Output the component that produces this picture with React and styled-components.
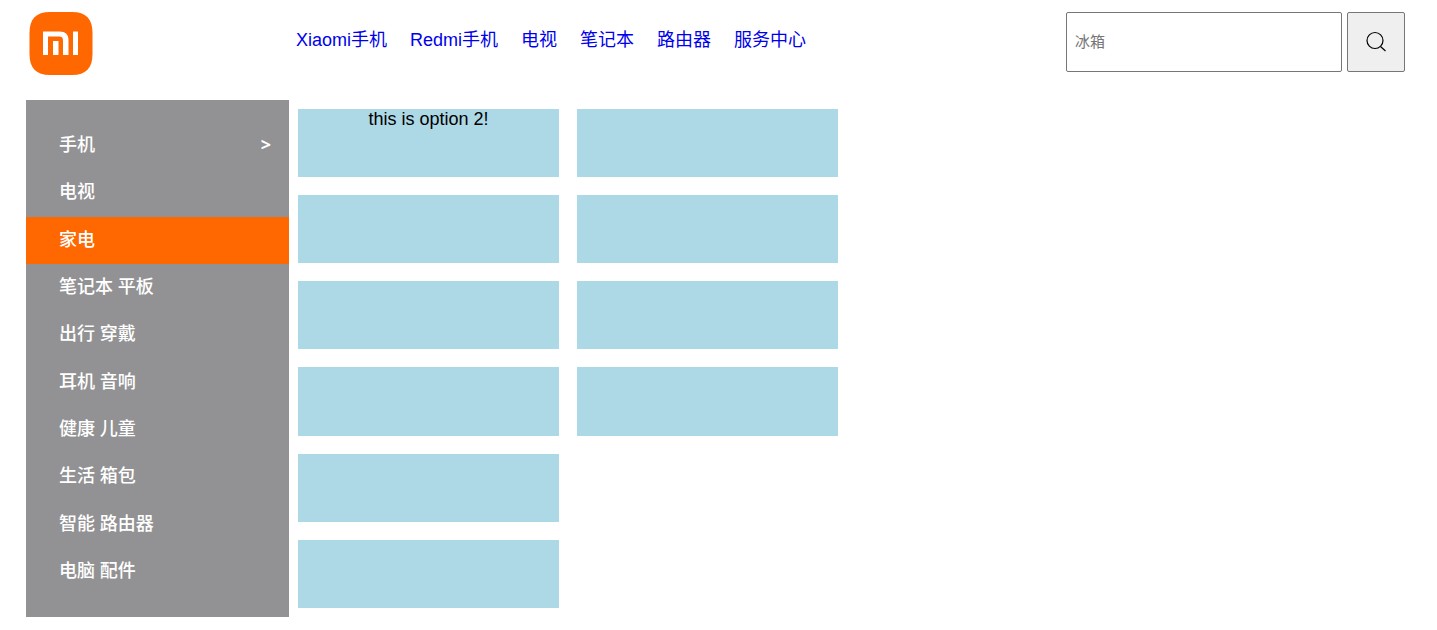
import React from "react";
import styled, { createGlobalStyle } from "styled-components";

const GlobalStyle = createGlobalStyle`
  * {
    box-sizing: border-box;
  }

  body {
    margin: 0;
    background: #ffffff;
    color: #000000;
    font-family: "Liberation Sans", "Noto Sans CJK SC", sans-serif;
    font-size: 18px;
  }
`;

const Page = styled.div`
  padding: 0 32px 13px 26px;
`;

const Header = styled.header`
  display: flex;
  align-items: flex-start;
  height: 100px;
  padding-top: 12px;
`;

const LogoLink = styled.a`
  flex: 0 0 270px;
  padding-left: 3px;

  svg {
    display: block;
  }
`;

const Nav = styled.nav`
  display: flex;
  flex: 1;
  gap: 23px;
  padding-top: 15px;
`;

const NavLink = styled.a`
  color: #0000ee;
  line-height: 26px;
  text-decoration: none;
  white-space: nowrap;
`;

const SearchForm = styled.form`
  display: flex;
  gap: 5px;
`;

const SearchInput = styled.input`
  width: 276px;
  height: 60px;
  padding: 0 8px 2px;
  border: 1px solid #767676;
  border-radius: 2px;
  background: #ffffff;
  font: inherit;
  font-size: 15px;

  &::placeholder {
    color: #757575;
  }
`;

const SearchButton = styled.button`
  display: flex;
  align-items: center;
  justify-content: center;
  width: 58px;
  height: 60px;
  padding: 0;
  border: 1px solid #767676;
  border-radius: 2px;
  background: #efefef;
  color: #000000;
`;

const Main = styled.main`
  display: flex;
  min-height: 517px;
`;

const Sidebar = styled.ul`
  display: flex;
  flex: 0 0 263px;
  flex-direction: column;
  margin: 0;
  padding: 22px 0;
  background: #929294;
  list-style: none;
`;

const Category = styled.li`
  display: flex;
  flex: 1;
  background: ${({ $active }) => ($active ? "#ff6700" : "transparent")};
`;

const CategoryLink = styled.a`
  display: flex;
  flex: 1;
  align-items: center;
  justify-content: space-between;
  padding: 0 18px 3px 33px;
  color: #ffffff;
  font-family: "Open Sans", "Noto Sans CJK SC", sans-serif;
  font-weight: 500;
  line-height: 24px;
  text-decoration: none;
`;

const Arrow = styled.span`
  font-weight: 700;
`;

const Options = styled.section`
  display: grid;
  flex: 1;
  grid-auto-columns: 261px;
  grid-auto-flow: column;
  grid-template-rows: repeat(6, 1fr);
  gap: 18px;
  padding: 9px;
`;

const OptionCard = styled.div`
  background: #add8e6;
  line-height: 20px;
  text-align: center;
`;

const navItems = ["Xiaomi手机", "Redmi手机", "电视", "笔记本", "路由器", "服务中心"];

const categories = [
  { name: "手机", arrow: true },
  { name: "电视" },
  { name: "家电", active: true },
  { name: "笔记本 平板" },
  { name: "出行 穿戴" },
  { name: "耳机 音响" },
  { name: "健康 儿童" },
  { name: "生活 箱包" },
  { name: "智能 路由器" },
  { name: "电脑 配件" },
];

const options = ["this is option 2!", "", "", "", "", "", "", "", "", ""];

function MiLogo() {
  return (
    <svg width="64" height="64" viewBox="0 0 64 64" aria-hidden="true">
      <path
        fill="#ff6700"
        d="M21 0H43C57 0 63.500 7 63.500 21V42C63.500 56 57 63 43 63H21C7 63 0.500 56 0.500 42V21C0.500 7 7 0 21 0Z"
      />
      <path
        fill="#ffffff"
        d="M14 19.500h16.500c6 0 9 3 9 9V43h-5.500V29c0-3.500-1-4.500-4.500-4.500H19V43h-5ZM24 29h5.500v14H24ZM44 19.500h5V43h-5Z"
      />
    </svg>
  );
}

function SearchIcon() {
  return (
    <svg
      width="22"
      height="22"
      viewBox="0 0 22 22"
      fill="none"
      stroke="currentColor"
      strokeWidth="1.2"
      aria-hidden="true"
    >
      <circle cx="10" cy="9.500" r="8" />
      <path d="M15.500 15.500 20.500 20" />
    </svg>
  );
}

export default function App() {
  return (
    <>
      <GlobalStyle />
      <Page>
        <Header>
          <LogoLink href="#" aria-label="Xiaomi">
            <MiLogo />
          </LogoLink>
          <Nav>
            {navItems.map((item) => (
              <NavLink key={item} href="#">
                {item}
              </NavLink>
            ))}
          </Nav>
          <SearchForm role="search">
            <SearchInput type="text" placeholder="冰箱" aria-label="搜索" />
            <SearchButton type="button" aria-label="搜索">
              <SearchIcon />
            </SearchButton>
          </SearchForm>
        </Header>
        <Main>
          <Sidebar>
            {categories.map(({ name, arrow, active }) => (
              <Category key={name} $active={active}>
                <CategoryLink href="#">
                  {name}
                  {arrow && <Arrow>&gt;</Arrow>}
                </CategoryLink>
              </Category>
            ))}
          </Sidebar>
          <Options>
            {options.map((text, index) => (
              <OptionCard key={index}>{text}</OptionCard>
            ))}
          </Options>
        </Main>
      </Page>
    </>
  );
}
